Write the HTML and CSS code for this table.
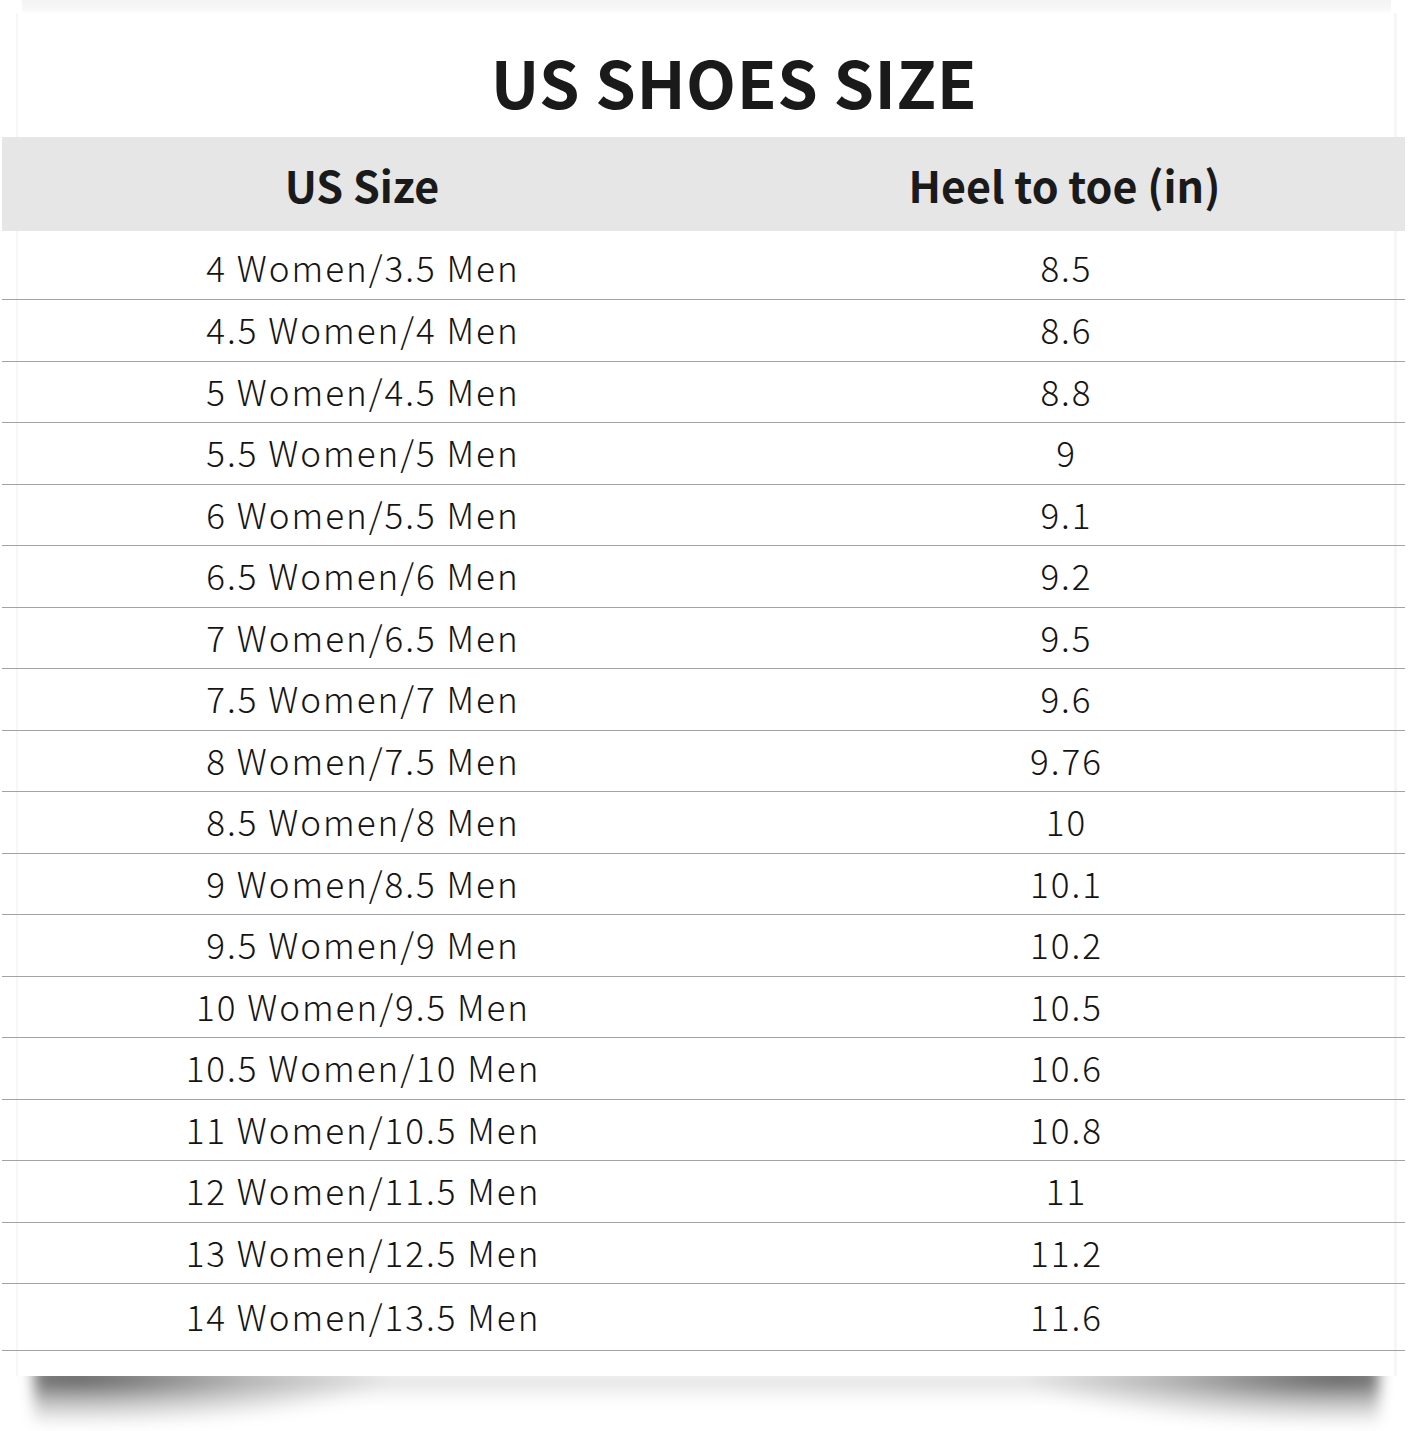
FILE: index.html
```html
<!DOCTYPE html>
<html lang="en">
<head>
<meta charset="utf-8">
<title>US Shoes Size</title>
<link rel="stylesheet" href="styles.css">
</head>
<body>
<div class="sheet">
  <div class="top-edge"></div>
  <div class="card">
    <h1 class="title">US SHOES SIZE</h1>
    <table class="sizes">
      <thead>
        <tr><th class="c1">US Size</th><th class="c2">Heel to toe (in)</th></tr>
      </thead>
      <tbody>
        <tr class="first"><td class="c1">4 Women/3.5 Men</td><td class="c2">8.5</td></tr>
        <tr><td class="c1">4.5 Women/4 Men</td><td class="c2">8.6</td></tr>
        <tr><td class="c1">5 Women/4.5 Men</td><td class="c2">8.8</td></tr>
        <tr><td class="c1">5.5 Women/5 Men</td><td class="c2">9</td></tr>
        <tr><td class="c1">6 Women/5.5 Men</td><td class="c2">9.1</td></tr>
        <tr><td class="c1">6.5 Women/6 Men</td><td class="c2">9.2</td></tr>
        <tr><td class="c1">7 Women/6.5 Men</td><td class="c2">9.5</td></tr>
        <tr><td class="c1">7.5 Women/7 Men</td><td class="c2">9.6</td></tr>
        <tr><td class="c1">8 Women/7.5 Men</td><td class="c2">9.76</td></tr>
        <tr><td class="c1">8.5 Women/8 Men</td><td class="c2">10</td></tr>
        <tr><td class="c1">9 Women/8.5 Men</td><td class="c2">10.1</td></tr>
        <tr><td class="c1">9.5 Women/9 Men</td><td class="c2">10.2</td></tr>
        <tr><td class="c1">10 Women/9.5 Men</td><td class="c2">10.5</td></tr>
        <tr><td class="c1">10.5 Women/10 Men</td><td class="c2">10.6</td></tr>
        <tr><td class="c1">11 Women/10.5 Men</td><td class="c2">10.8</td></tr>
        <tr><td class="c1">12 Women/11.5 Men</td><td class="c2">11</td></tr>
        <tr><td class="c1">13 Women/12.5 Men</td><td class="c2">11.2</td></tr>
        <tr class="last"><td class="c1">14 Women/13.5 Men</td><td class="c2">11.6</td></tr>
      </tbody>
    </table>
    <div class="card-foot"></div>
  </div>
  <div class="curl-wrap"><div class="curl"></div></div>
</div>
</body>
</html>
```
FILE: styles.css
```css
html, body {
  margin: 0;
  padding: 0;
  background: #ffffff;
}

.sheet {
  width: 1409px;
  height: 1431px;
  overflow: hidden;
  font-family: "Noto Sans CJK SC", "Noto Sans", sans-serif;
  color: #1c1c1c;
}

.top-edge {
  height: 13px;
  margin: 0 18px 0 22px;
  background: linear-gradient(to bottom, #f3f3f3, #f8f8f8 70%, #fdfdfd);
}

.card {
  margin: 0 12px 0 16px;
  border-left: 2px solid #f7f7f7;
  border-right: 3px solid #f6f6f6;
  background: #ffffff;
}

.title {
  margin: 0;
  height: 124px;
  padding: 7px 0 0 56px;
  box-sizing: border-box;
  font-size: 65px;
  font-weight: 700;
  line-height: 122px;
  text-align: center;
  letter-spacing: 0.5px;
  color: #1a1a1a;
}

.sizes {
  margin: 0 -9px 0 -16px;
  width: 1401px;
  border-collapse: collapse;
  table-layout: fixed;
}

.sizes .c1 { width: 720px; }
.sizes .c2 { width: 681px; }

.sizes thead th {
  height: 94px;
  padding: 0;
  background: #e6e6e6;
  font-size: 43px;
  font-weight: 700;
  line-height: 1;
  text-align: center;
  vertical-align: middle;
  color: #1a1a1a;
}

.sizes thead th.c2 { padding-left: 2px; }

.sizes tbody td {
  height: 57.5px;
  padding: 0 0 3px 0;
  border-bottom: 1px solid #a3a3a3;
  font-size: 35px;
  font-weight: 300;
  letter-spacing: 2px;
  line-height: 1;
  text-align: center;
  vertical-align: middle;
  color: #141414;
}

.sizes tbody td.c1 { padding-left: 2px; }
.sizes tbody td.c2 { padding-left: 6px; }

.sizes tbody tr.first td {
  height: 59px;
  padding-top: 6px;
}

.sizes tbody tr.last td {
  height: 63px;
}

.card-foot {
  height: 25px;
}

.curl-wrap {
  height: 56px;
  overflow: hidden;
}

.curl {
  height: 62px;
  margin: -12px 30px 0 34px;
  filter: blur(7px);
  background:
    radial-gradient(ellipse 320px 50px at 40px 12px, rgba(0,0,0,0.58), rgba(0,0,0,0.22) 55%, rgba(0,0,0,0) 100%),
    radial-gradient(ellipse 320px 50px at calc(100% - 40px) 12px, rgba(0,0,0,0.58), rgba(0,0,0,0.22) 55%, rgba(0,0,0,0) 100%),
    linear-gradient(to bottom, rgba(0,0,0,0) 8px, rgba(0,0,0,0.14) 12px, rgba(0,0,0,0.06) 24px, rgba(0,0,0,0) 40px);
}
```
